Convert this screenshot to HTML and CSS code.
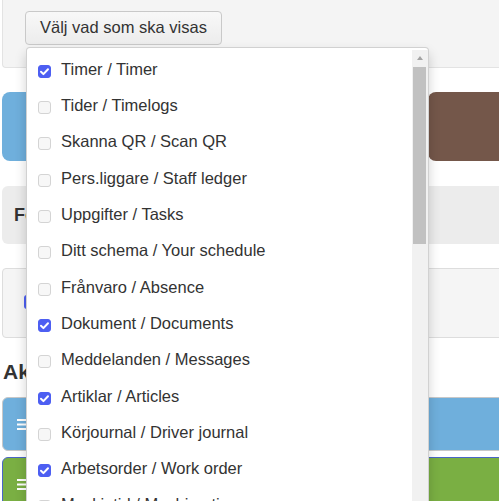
FILE: index.html
```html
<!DOCTYPE html>
<html lang="sv">
<head>
<meta charset="utf-8">
<title>Välj vad som ska visas</title>
<link rel="stylesheet" href="styles.css">
</head>
<body>
<div class="page">
  <div class="panel">
    <button class="btn" type="button">Välj vad som ska visas</button>
  </div>
  <div class="tiles">
    <div class="tile tile-blue"></div>
    <div class="tile tile-brown"></div>
  </div>
  <div class="info">Företagsinformation</div>
  <div class="box"><span class="box-cb"></span></div>
  <h2 class="heading">Aktiviteter</h2>
  <div class="act act-blue">
    <svg class="bars" width="9" height="11" viewBox="0 0 9 11"><rect x="0" y="0" width="9" height="2" fill="#fff"/><rect x="0" y="4.5" width="9" height="2" fill="#fff"/><rect x="0" y="9" width="9" height="2" fill="#fff"/></svg>
  </div>
  <div class="act act-green">
    <svg class="bars" width="9" height="11" viewBox="0 0 9 11"><rect x="0" y="0" width="9" height="2" fill="#fff"/><rect x="0" y="4.5" width="9" height="2" fill="#fff"/><rect x="0" y="9" width="9" height="2" fill="#fff"/></svg>
  </div>
</div>

<div class="dropdown">
  <ul class="list">
    <li class="item"><span class="cb on"><svg viewBox="0 0 13 13" width="13" height="13"><path d="M3 6.8 L5.4 9.1 L10 4.2" fill="none" stroke="#fff" stroke-width="2" stroke-linecap="round" stroke-linejoin="round"/></svg></span><span class="lbl">Timer / Timer</span></li>
    <li class="item"><span class="cb"></span><span class="lbl">Tider / Timelogs</span></li>
    <li class="item"><span class="cb"></span><span class="lbl">Skanna QR / Scan QR</span></li>
    <li class="item"><span class="cb"></span><span class="lbl">Pers.liggare / Staff ledger</span></li>
    <li class="item"><span class="cb"></span><span class="lbl">Uppgifter / Tasks</span></li>
    <li class="item"><span class="cb"></span><span class="lbl">Ditt schema / Your schedule</span></li>
    <li class="item"><span class="cb"></span><span class="lbl">Frånvaro / Absence</span></li>
    <li class="item"><span class="cb on"><svg viewBox="0 0 13 13" width="13" height="13"><path d="M3 6.8 L5.4 9.1 L10 4.2" fill="none" stroke="#fff" stroke-width="2" stroke-linecap="round" stroke-linejoin="round"/></svg></span><span class="lbl">Dokument / Documents</span></li>
    <li class="item"><span class="cb"></span><span class="lbl">Meddelanden / Messages</span></li>
    <li class="item"><span class="cb on"><svg viewBox="0 0 13 13" width="13" height="13"><path d="M3 6.8 L5.4 9.1 L10 4.2" fill="none" stroke="#fff" stroke-width="2" stroke-linecap="round" stroke-linejoin="round"/></svg></span><span class="lbl">Artiklar / Articles</span></li>
    <li class="item"><span class="cb"></span><span class="lbl">Körjournal / Driver journal</span></li>
    <li class="item"><span class="cb on"><svg viewBox="0 0 13 13" width="13" height="13"><path d="M3 6.8 L5.4 9.1 L10 4.2" fill="none" stroke="#fff" stroke-width="2" stroke-linecap="round" stroke-linejoin="round"/></svg></span><span class="lbl">Arbetsorder / Work order</span></li>
    <li class="item"><span class="cb"></span><span class="lbl">Maskintid / Machine time</span></li>
  </ul>
  <div class="scrollbar">
    <div class="arrow"></div>
    <div class="thumb"></div>
  </div>
</div>
</body>
</html>
```

FILE: styles.css
```css
html, body {
  margin: 0;
  padding: 0;
  overflow: hidden;
  background: #fff;
  font-family: "Liberation Sans", Arial, sans-serif;
  color: #333;
}

.page {
  width: 530px;
  margin-left: 2px;
}

.panel {
  background: #f4f4f4;
  border-left: 1px solid #e3e3e3;
  border-bottom: 1px solid #e3e3e3;
  border-bottom-left-radius: 4px;
  height: 68px;
  box-sizing: border-box;
  padding: 11px 0 0 22px;
}

.btn {
  font-family: "Liberation Sans", Arial, sans-serif;
  font-size: 16.5px;
  color: #333;
  height: 34px;
  padding: 0 14px 2px 14px;
  background: linear-gradient(#f8f8f8, #ececec);
  border: 1px solid #c9c9c9;
  border-radius: 4px;
  line-height: 20px;
}

.tiles {
  display: flex;
  justify-content: space-between;
  margin-top: 24px;
}

.tile {
  height: 69px;
  border-radius: 8px;
}

.tile-blue {
  width: 140px;
  background: #6fafdc;
}

.tile-brown {
  width: 104px;
  background: #74574a;
}

.info {
  margin-top: 25px;
  height: 58px;
  background: #ececec;
  border-radius: 6px;
  font-size: 18px;
  font-weight: bold;
  line-height: 58px;
  padding-left: 12px;
}

.box {
  margin-top: 24px;
  height: 70px;
  box-sizing: border-box;
  background: #f5f5f5;
  border: 1px solid #dddddd;
  border-radius: 4px;
  padding: 26px 0 0 21px;
}

.box-cb {
  display: block;
  width: 14px;
  height: 14px;
  border-radius: 3px;
  background: #4d5ff2;
}

.heading {
  margin: 22px 0 13px 1px;
  font-size: 21px;
  line-height: 24px;
  font-weight: bold;
}

.act {
  height: 54px;
  box-sizing: border-box;
  border-radius: 6px;
  display: flex;
  align-items: center;
  padding-left: 14px;
}

.act-blue {
  background: #6fafdc;
  border: 1px solid #c8c8c8;
}

.act-green {
  margin-top: 6px;
  background: #7aaf43;
  border: 1px solid #4a66c6;
}

.dropdown {
  position: absolute;
  left: 26px;
  top: 47px;
  width: 403px;
  height: 480px;
  box-sizing: border-box;
  background: #fff;
  border: 1px solid rgba(0, 0, 0, 0.18);
  border-radius: 4px;
  box-shadow: 0 6px 12px rgba(0, 0, 0, 0.18);
  display: flex;
  overflow: hidden;
}

.list {
  flex: 1;
  list-style: none;
  margin: 0;
  padding: 3.2px 0 0 0;
}

.item {
  height: 36.3px;
  display: flex;
  align-items: center;
  padding-left: 11px;
  font-size: 16.5px;
  white-space: nowrap;
}

.cb {
  width: 13px;
  height: 13px;
  box-sizing: border-box;
  border: 1px solid #d4d4d4;
  background: #f7f7f7;
  border-radius: 3px;
  margin-top: 4px;
  flex: none;
  display: flex;
}

.cb.on {
  background: #4d5ff2;
  border-color: #4d5ff2;
}

.cb.on svg {
  margin: -1px;
}

.lbl {
  margin-left: 10px;
}

.scrollbar {
  width: 16px;
  background: #f1f1f1;
  margin-top: 2px;
  display: flex;
  flex-direction: column;
  align-items: center;
}

.arrow {
  margin-top: 6px;
  width: 0;
  height: 0;
  border-left: 3.5px solid transparent;
  border-right: 3.5px solid transparent;
  border-bottom: 4px solid #a3a3a3;
}

.thumb {
  margin-top: 7px;
  width: 13px;
  margin-right: 1px;
  height: 177px;
  background: #c1c1c1;
}
```
